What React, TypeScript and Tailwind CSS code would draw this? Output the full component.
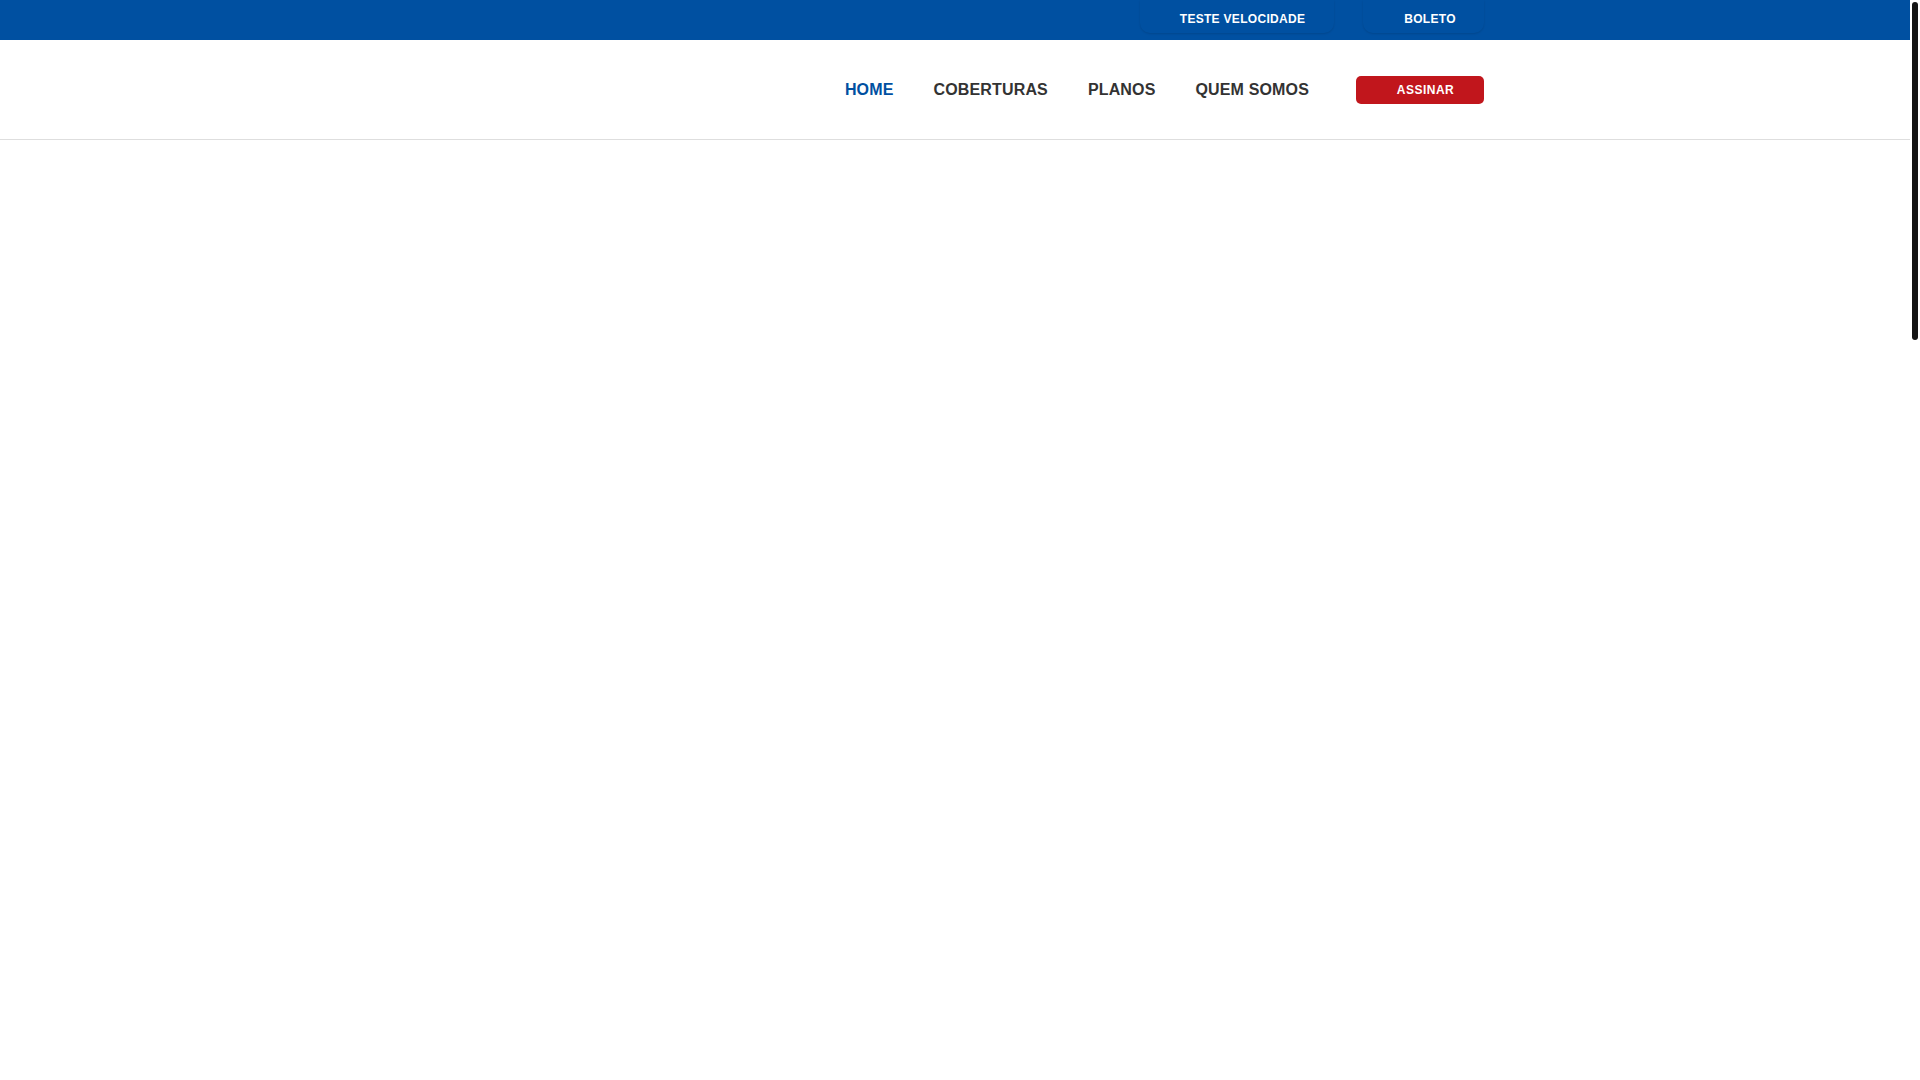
import React from "react";

const font = { fontFamily: '"Liberation Sans", Arial, sans-serif' };

export default function App() {
  return (
    <div className="flex h-screen w-full overflow-hidden bg-white" style={font}>
      <div className="h-full min-w-0 flex-1">
        {/* Top bar */}
        <div className="flex h-[40px] w-full justify-end bg-[#0050a1] pr-[426px]">
          <div className="flex items-start gap-[29px]">
            <a className="flex h-[33px] w-[194px] items-center justify-center rounded-b-[10px] pl-[11px] pt-[5px] text-[12px] font-bold tracking-[0.3px] text-white shadow-[0_1px_2px_rgba(0,0,0,0.12)]">
              TESTE VELOCIDADE
            </a>
            <a className="flex h-[33px] w-[121px] items-center justify-center rounded-b-[10px] pl-[13px] pt-[5px] text-[12px] font-bold tracking-[0.3px] text-white shadow-[0_1px_2px_rgba(0,0,0,0.12)]">
              BOLETO
            </a>
          </div>
        </div>

        {/* Main nav */}
        <header className="flex h-[100px] w-full items-center justify-end border-b border-[#dedede] pr-[426px]">
          <nav className="flex items-center">
            <a className="px-[20px] text-[16px] font-bold tracking-[0.15px] text-[#0050a1]">HOME</a>
            <a className="px-[20px] text-[16px] font-bold tracking-[0.15px] text-[#333333]">COBERTURAS</a>
            <a className="px-[20px] text-[16px] font-bold tracking-[0.15px] text-[#333333]">PLANOS</a>
            <a className="px-[20px] text-[16px] font-bold tracking-[0.15px] text-[#333333]">QUEM SOMOS</a>
          </nav>
          <a className="ml-[27px] mt-[1px] flex h-[28px] w-[128px] items-center justify-center rounded-[5px] bg-[#c1161c] pl-[11px] text-[12px] font-bold tracking-[0.5px] text-white">
            ASSINAR
          </a>
        </header>
      </div>

      {/* Scrollbar track */}
      <div className="flex h-full w-[10px] shrink-0 flex-col bg-white px-[2px] pt-[2px]">
        <div className="h-[338px] w-[6px] rounded-full bg-[#141414]" />
      </div>
    </div>
  );
}
